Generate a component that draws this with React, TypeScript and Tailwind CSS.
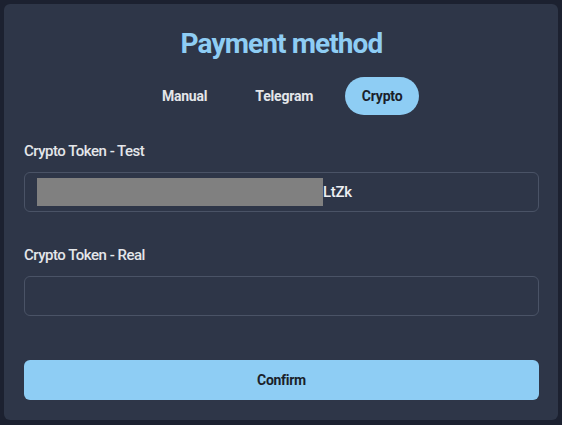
export default function App() {
  return (
    <div className="w-[562px] h-[425px] bg-[#1c2130] p-[4px] pb-[5px]" style={{ fontFamily: "Roboto, 'Noto Sans', sans-serif" }}>
      <div className="w-full h-full bg-[#2e3648] rounded-[6px] pl-[20px] pr-[19px] flex flex-col">
        <h1 className="mt-[22px] text-center text-[28px] leading-[36px] font-bold text-[#8ecdf4] tracking-[-0.9px]">Payment method</h1>
        <div className="mt-[15px] flex justify-center items-center gap-[16px] h-[38px] pl-[2px]">
          <button className="h-[38px] px-[16px] rounded-full text-[14px] font-bold text-[#e4e6ea] tracking-[-0.2px]">Manual</button>
          <button className="h-[38px] px-[16px] rounded-full text-[14px] font-bold text-[#e4e6ea] tracking-[-0.2px]">Telegram</button>
          <button className="h-[38px] w-[74px] rounded-full text-[14px] font-bold text-[#1a1f2b] bg-[#8ecdf4] tracking-[-0.2px]">Crypto</button>
        </div>
        <label className="mt-[26px] text-[15px] leading-[20px] font-medium text-[#e4e6ea] tracking-[-0.5px]">Crypto Token - Test</label>
        <div className="mt-[11px] h-[40px] border border-[#4a5366] rounded-[6px] flex items-center px-[12px]">
          <div className="w-[286px] h-[28px] bg-[#808080]" />
          <span className="text-[15px] font-medium text-[#eef0f3] tracking-[-0.3px]">LtZk</span>
        </div>
        <label className="mt-[33px] text-[15px] leading-[20px] font-medium text-[#e4e6ea] tracking-[-0.5px]">Crypto Token - Real</label>
        <div className="mt-[11px] h-[40px] border border-[#4a5366] rounded-[6px]" />
        <button className="mt-[44px] h-[40px] rounded-[6px] bg-[#8ecdf4] text-[14px] font-bold text-[#1a1f2b] tracking-[-0.3px]">Confirm</button>
      </div>
    </div>
  );
}
